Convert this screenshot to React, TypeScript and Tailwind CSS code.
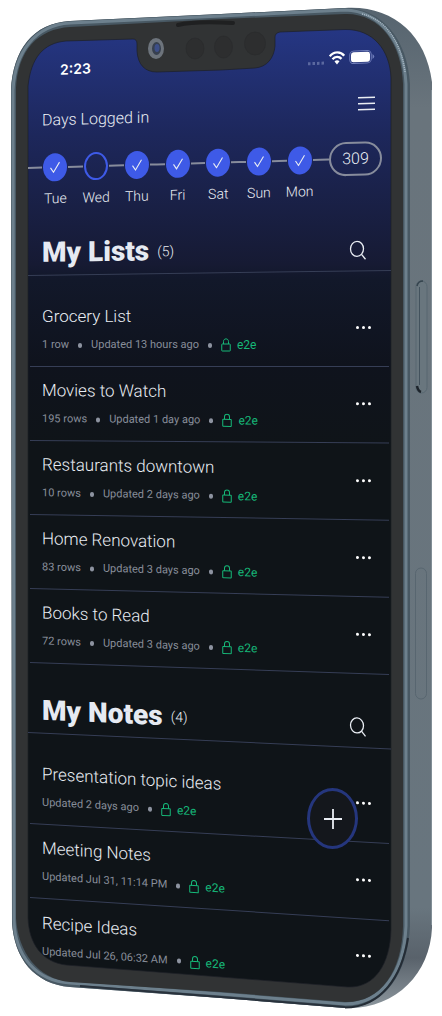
import React from "react";

type Item = { title: string; meta: string[]; tilt: string };

const days = [
  { label: "Tue", done: true },
  { label: "Wed", done: false },
  { label: "Thu", done: true },
  { label: "Fri", done: true },
  { label: "Sat", done: true },
  { label: "Sun", done: true },
  { label: "Mon", done: true },
];

const lists: Item[] = [
  { title: "Grocery List", meta: ["1 row", "Updated 13 hours ago"], tilt: "border-b skew-y-[0deg]" },
  { title: "Movies to Watch", meta: ["195 rows", "Updated 1 day ago"], tilt: "border-b skew-y-[0.4deg]" },
  { title: "Restaurants downtown", meta: ["10 rows", "Updated 2 days ago"], tilt: "border-b skew-y-[0.9deg]" },
  { title: "Home Renovation", meta: ["83 rows", "Updated 3 days ago"], tilt: "border-b skew-y-[1.4deg]" },
  { title: "Books to Read", meta: ["72 rows", "Updated 3 days ago"], tilt: "border-b skew-y-[1.9deg]" },
];

const notes: Item[] = [
  { title: "Presentation topic ideas", meta: ["Updated 2 days ago"], tilt: "border-b skew-y-[3.2deg]" },
  { title: "Meeting Notes", meta: ["Updated Jul 31, 11:14 PM"], tilt: "border-b skew-y-[3.7deg]" },
  { title: "Recipe Ideas", meta: ["Updated Jul 26, 06:32 AM"], tilt: "skew-y-[4deg]" },
];

function Device() {
  return (
    <svg
      aria-hidden="true"
      viewBox="0 0 442 1016"
      preserveAspectRatio="none"
      className="absolute inset-0 h-full w-full"
    >
      <defs>
        <linearGradient id="screen" x1="0" y1="30" x2="0" y2="987" gradientUnits="userSpaceOnUse">
          <stop offset="0" stopColor="#253683" />
          <stop offset="0.11" stopColor="#1d275b" />
          <stop offset="0.245" stopColor="#161a33" />
          <stop offset="0.26" stopColor="#12182a" />
          <stop offset="0.35" stopColor="#0f131d" />
          <stop offset="0.44" stopColor="#0f1418" />
          <stop offset="1" stopColor="#0f1418" />
        </linearGradient>
        <linearGradient id="side" x1="0" y1="8" x2="0" y2="1008" gradientUnits="userSpaceOnUse">
          <stop offset="0" stopColor="#56646f" />
          <stop offset="0.1" stopColor="#69747c" />
          <stop offset="0.9" stopColor="#68757e" />
          <stop offset="0.95" stopColor="#59626b" />
          <stop offset="1" stopColor="#8c969d" />
        </linearGradient>
      </defs>
      <path
        d="M11 90C13 50 33 23 70 21L221 14L345 8C392 5 426 34 432 82V928C430 974 395 1010 345 1008L221 998L70 987C34 984 14 958 12 922Z"
        fill="url(#side)"
      />
      <path
        d="M11 90C13 50 33 23 70 21L221 14L345 8C382 8 408 40 410 84V926C408 974 384 1008 345 1008L221 998L70 987C34 984 14 958 12 922Z"
        fill="#485863"
      />
      <path
        d="M13 90C15 52 35 25 70 23L221 16L345 10C380 11 404 42 406 84V926C404 972 382 1004 345 1004L221 994L70 983C36 981 15 956 14 920Z"
        fill="none"
        stroke="#6d808d"
        strokeWidth="3"
      />
      <path d="M345 1007.500C382 1007 402 976 408 938" fill="none" stroke="#242c35" strokeWidth="2" />
      <path d="M80 986L221 997L345 1007" fill="none" stroke="#29323c" strokeWidth="2" />
      <path d="M362 14C388 20 401 44 405 72" fill="none" stroke="#a9b9c6" strokeWidth="1.500" strokeDasharray="1 1" />
      <path
        d="M16 88C18 50 38 29 70 27L221 19L345 14C380 13 402 44 403 84V926C402 972 380 1003 345 1002L221 992L70 982C38 979 18 952 16 918Z"
        fill="#313334"
      />
      <path
        d="M28 86C31 58 43 43 66 41L133 39Q137 39 137 44V51C138 65 145 72 157 72L221 70L255 68C267 67 274 58 275 46V37Q275 33 280 32L345 29.500C373 29 390 50 391 78V930C390 964 375 988 348 987L221 977L66 965C42 962 29 944 28 918Z"
        fill="url(#screen)"
        stroke="#1c2026"
        strokeWidth="0.700"
      />
      <path d="M178 25C190 22 215 22 233 23" fill="none" stroke="#1f2021" strokeWidth="4" strokeLinecap="round" />
      <ellipse cx="156" cy="48.500" rx="8" ry="10.500" fill="#6d747c" />
      <ellipse cx="156.500" cy="48.500" rx="4.500" ry="6.500" fill="#37404f" />
      <ellipse cx="157" cy="48" rx="2.500" ry="4" fill="#3d4f88" />
      <g fill="#2d2e2f" stroke="#292b2c" strokeWidth="0.700">
        <ellipse cx="195" cy="48.500" rx="9" ry="10.500" />
        <ellipse cx="223.500" cy="47" rx="9" ry="11" />
        <ellipse cx="255" cy="43.500" rx="10.500" ry="11.500" />
      </g>
      <rect x="416" y="281" width="11" height="112" rx="5.500" fill="#69767e" stroke="#586771" />
      <path d="M419.500 287V385" stroke="#43525d" />
      <path d="M417 386Q418 391 421 392" fill="none" stroke="#1d242b" strokeWidth="2.500" />
      <path d="M417 286Q418 281 423 281" fill="none" stroke="#35444e" strokeWidth="1.500" />
      <rect x="415.500" y="568" width="11" height="131" rx="5.500" fill="none" stroke="#586670" />
      <path d="M431.500 90V925" stroke="#818e96" />
    </svg>
  );
}

function Lock() {
  return (
    <svg aria-hidden="true" viewBox="0 0 10 14" className="h-3.5 w-2.5" fill="none" stroke="currentColor">
      <rect x="0.750" y="6" width="8.500" height="7" rx="0.500" />
      <path d="M2.500 6V3.500C2.500 0 7.500 0 7.500 3.500V6" />
    </svg>
  );
}

function Dot() {
  return <span className="h-[5px] w-1 rounded-full bg-[#8d93a0]" />;
}

function SectionHeader({ title, count, tilt }: { title: string; count: number; tilt: string }) {
  return (
    <header
      className={`flex h-[46px] origin-left items-center justify-between border-b border-[#363e56] pr-6 pl-3.5 ${tilt}`}
    >
      <div className="flex items-center gap-2">
        <h2 className="text-[28px] leading-9 font-black text-[#e6eaf2]">{title}</h2>
        <span className="text-sm font-light">({count})</span>
      </div>
      <button type="button" aria-label={`Search ${title}`} className="pt-1">
        <svg viewBox="0 0 18 20" className="h-5 w-[18px]" fill="none" stroke="currentColor" strokeWidth="1.300">
          <ellipse cx="8" cy="8.500" rx="6.500" ry="7.500" />
          <path d="M12.500 14L16.500 19" />
        </svg>
      </button>
    </header>
  );
}

function Rows({ items }: { items: Item[] }) {
  return (
    <ul className="px-0.5 pt-[17px]">
      {items.map((item) => (
        <li
          key={item.title}
          className={`flex h-[74px] origin-left items-center justify-between border-[#363e56] pr-[18px] pl-3 ${item.tilt}`}
        >
          <div className="flex flex-col gap-[7px]">
            <h3 className="text-[17px] leading-6 font-light whitespace-nowrap text-[#e9edf3]">{item.title}</h3>
            <div className="flex items-center gap-[9px] text-[11px] leading-5 whitespace-nowrap text-[#888e9a]">
              {item.meta.map((part) => (
                <React.Fragment key={part}>
                  <span>{part}</span>
                  <Dot />
                </React.Fragment>
              ))}
              <span className="flex items-center gap-1.5 text-xs leading-5 text-[#16b878]">
                <Lock />
                <span>e2e</span>
              </span>
            </div>
          </div>
          <button type="button" aria-label={`Options for ${item.title}`} className="flex gap-[3px] pb-[5px]">
            <span className="h-[3px] w-[3px] rounded-full bg-white" />
            <span className="h-[3px] w-[3px] rounded-full bg-white" />
            <span className="h-[3px] w-[3px] rounded-full bg-white" />
          </button>
        </li>
      ))}
    </ul>
  );
}

export default function App() {
  return (
    <div className="bg-white">
      <div className="relative mx-auto max-w-[442px] overflow-hidden font-[Roboto,sans-serif] text-[#e9edf3]">
        <Device />
        <main className="relative pt-[61px] pr-[51px] pb-[44px] pl-7">
          <div className="flex h-5 origin-left skew-y-[-2.4deg] items-center justify-between pr-4 pl-8">
            <time className="font-[Inter] text-sm font-semibold text-white">2:23</time>
            <div className="flex items-center gap-1">
              <svg aria-hidden="true" viewBox="0 0 17 18" className="h-[18px] w-[17px]" fill="#5b689f">
                <rect x="0" y="12" width="2.500" height="3" />
                <rect x="4.500" y="12" width="2.500" height="3" />
                <rect x="9" y="12" width="2.500" height="3" />
                <rect x="13.500" y="12" width="2.500" height="3" />
              </svg>
              <svg aria-hidden="true" viewBox="0 0 16 14" className="h-3.5 w-4" fill="none" stroke="white" strokeWidth="2.300">
                <path d="M0.800 5C4.500 0.200 11.500 0.200 15.200 5" />
                <path d="M3.500 8C6 5 10 5 12.500 8" />
                <path d="M5.500 10.300Q8 8 10.500 10.300L8 13.500Z" fill="white" stroke="none" />
              </svg>
              <svg aria-hidden="true" viewBox="0 0 26 14" className="h-3.5 w-[26px]">
                <rect x="0.750" y="0.750" width="21.500" height="12.500" rx="4" fill="none" stroke="#6f7dba" />
                <rect x="2" y="2" width="19" height="10" rx="2.500" fill="white" />
                <path d="M23.500 4.500Q27 7 23.500 9.500Z" fill="#6f7dba" />
              </svg>
            </div>
          </div>

          <div className="mt-[22px] flex h-7 origin-left skew-y-[-1.6deg] items-start justify-between pr-4 pl-3.5">
            <h1 className="pt-2 text-base leading-5 font-light">Days Logged in</h1>
            <button type="button" aria-label="Menu">
              <svg viewBox="0 0 17 20" className="h-5 w-[17px]" stroke="currentColor" strokeWidth="1.500">
                <path d="M0 4H17M0 10H17M0 16H17" />
              </svg>
            </button>
          </div>

          <div className="mt-5 flex origin-left skew-y-[-1.6deg] items-start pr-[9px]">
            <span className="mt-4 h-0.5 w-[7px] bg-[#878c9c]" />
            <ol className="flex flex-1">
              {days.map((day) => (
                <li key={day.label} className="flex flex-1 flex-col items-center gap-1">
                  <div className="flex h-[34px] w-full items-center gap-px">
                    <span className="h-0.5 flex-1 bg-[#878c9c]" />
                    <span
                      className={`flex h-7 w-6 items-center justify-center rounded-[50%] ${
                        day.done ? "bg-[#3e5ae7]" : "border-2 border-[#3e5ae7]"
                      }`}
                    >
                      {day.done && (
                        <svg aria-hidden="true" viewBox="0 0 10 12" className="h-3 w-2.5" fill="none" stroke="#e9edf3" strokeWidth="1.100">
                          <path d="M0.500 6.500L3.500 11L9.500 1" />
                        </svg>
                      )}
                    </span>
                    <span className="h-0.5 flex-1 bg-[#878c9c]" />
                  </div>
                  <span className="text-sm leading-5 font-light">{day.label}</span>
                </li>
              ))}
            </ol>
            <span className="mt-4 h-0.5 w-[9px] bg-[#878c9c]" />
            <span className="flex h-[34px] w-[53px] items-center justify-center rounded-full border-2 border-[#878c9c] text-base font-light">
              309
            </span>
          </div>

          <section className="mt-[21px]">
            <SectionHeader title="My Lists" count={5} tilt="skew-y-[-0.8deg]" />
            <Rows items={lists} />
          </section>

          <section className="mt-6">
            <SectionHeader title="My Notes" count={4} tilt="skew-y-[2.6deg]" />
            <Rows items={notes} />
          </section>
        </main>
        <button
          type="button"
          aria-label="Add"
          className="absolute top-[788px] right-[84px] flex h-[61px] w-[51px] items-center justify-center rounded-[50%] border-3 border-[#25367d] bg-[#14171c]"
        >
          <svg viewBox="0 0 18 20" className="h-5 w-[18px]" stroke="currentColor" strokeWidth="1.800">
            <path d="M9 0V20M0 10H18" />
          </svg>
        </button>
      </div>
    </div>
  );
}
